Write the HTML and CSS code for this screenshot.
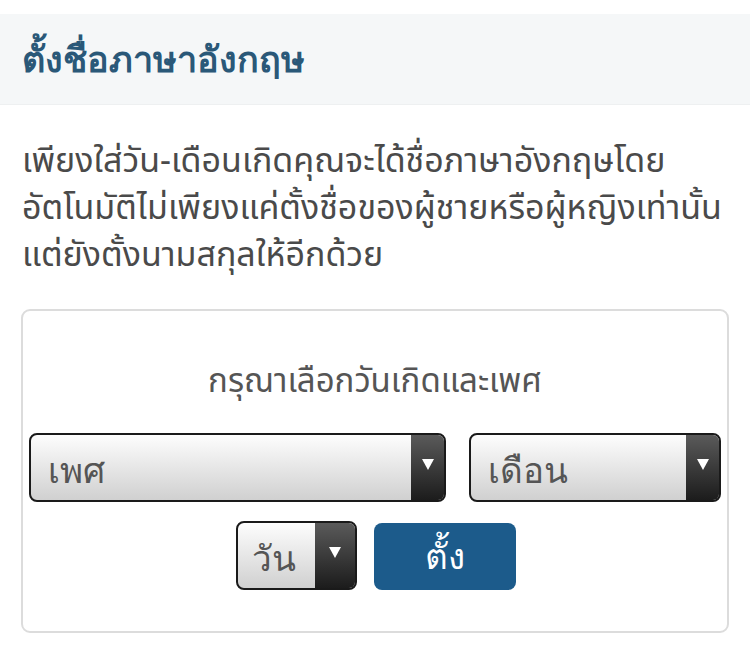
FILE: index.html
```html
<!DOCTYPE html>
<html lang="th">
<head>
<meta charset="utf-8">
<link rel="stylesheet" href="styles.css">
</head>
<body>
<div class="page">
  <div class="header"><h1 class="title">ตั้งชื่อภาษาอังกฤษ</h1></div>
  <p class="intro">เพียงใส่วัน-เดือนเกิดคุณจะได้ชื่อภาษาอังกฤษโดย<br>อัตโนมัติไม่เพียงแค่ตั้งชื่อของผู้ชายหรือผู้หญิงเท่านั้น<br>แต่ยังตั้งนามสกุลให้อีกด้วย</p>
  <div class="box">
    <div class="label">กรุณาเลือกวันเกิดและเพศ</div>
    <div class="row row1">
      <div class="select sel-sex"><span class="sel-text">เพศ</span><span class="sel-arrow"></span></div>
      <div class="select sel-month"><span class="sel-text">เดือน</span><span class="sel-arrow"></span></div>
    </div>
    <div class="row row2">
      <div class="select sel-day"><span class="sel-text">วัน</span><span class="sel-arrow"></span></div>
      <button class="btn">ตั้ง</button>
    </div>
  </div>
</div>
</body>
</html>
```
FILE: styles.css
```css
html, body { margin: 0; padding: 0; background: #fff; }
body { font-family: "Noto Sans Thai", "Noto Sans", sans-serif; }
.page { width: 750px; padding-top: 14px; }
.header { background: #f5f7f8; height: 90px; display: flex; align-items: center; padding-left: 22px; border-bottom: 1px solid #eef0f1; }
.title { margin: 0; font-family: "Liberation Sans", sans-serif; font-size: 36px; font-weight: bold; color: #2a5878; }
.intro { margin: 33px 0 0 0; padding: 0 22px; font-size: 34px; font-stretch: 75%; line-height: 47px; color: #4a4a4a; }
.box { margin: 30px 21px 0 21px; height: 324px; border: 2px solid #dcdcdc; border-radius: 9px; box-sizing: border-box; padding: 50px 6px 0 6px; }
.label { text-align: center; font-size: 33px; font-stretch: 87.5%; color: #555; height: 72px; line-height: 42px; }
.row { display: flex; }
.row1 { gap: 23px; }
.row2 { justify-content: center; gap: 17px; margin-top: 19px; margin-left: 2px; }
.select { display: flex; height: 69px; border: 2px solid #1a1a1a; border-radius: 8px; box-sizing: border-box; overflow: hidden; background: linear-gradient(#fdfdfd, #d0d0d0); }
.sel-sex { width: 417px; }
.sel-month { width: 252px; }
.sel-day { width: 121px; }
.sel-text { flex: 1; font-family: "Liberation Sans", sans-serif; font-size: 35px; color: #555; display: flex; align-items: center; padding-left: 17px; padding-top: 5px; }
.sel-day .sel-text { padding-left: 14px; }
.sel-arrow { width: 33px; background: linear-gradient(#5a5a5a, #1c1c1c); display: flex; align-items: center; justify-content: center; }
.sel-day .sel-arrow { width: 40px; }
.sel-arrow::after { content: ""; width: 0; height: 0; border-left: 6px solid transparent; border-right: 6px solid transparent; border-top: 11px solid #fff; margin-top: -6px; }
.btn { width: 142px; height: 67px; margin-top: 2px; border: none; border-radius: 8px; background: #1c5b8b; color: #fff; font-family: "Liberation Sans", sans-serif; font-size: 35px; padding: 0; }
```
